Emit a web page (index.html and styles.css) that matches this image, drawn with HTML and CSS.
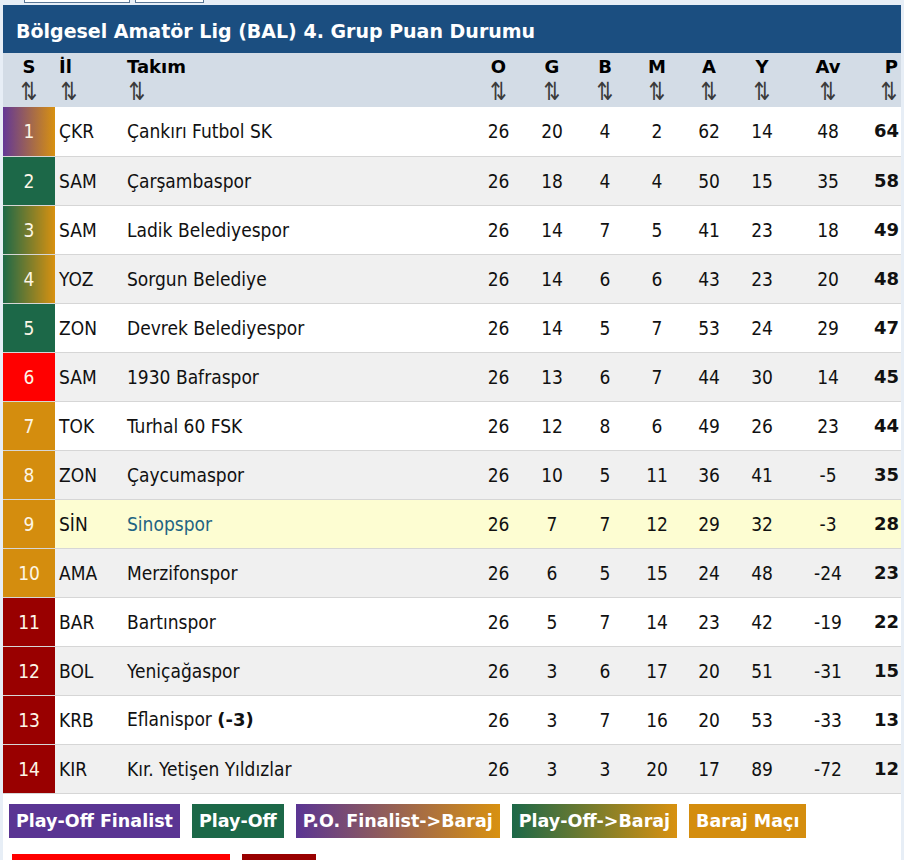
FILE: index.html
```html
<!DOCTYPE html>
<html lang="tr">
<head>
<meta charset="utf-8">
<title>Puan Durumu</title>
<link rel="stylesheet" href="styles.css">
</head>
<body>
<div class="page">
  <div class="tabs"><span class="tab tab-a"></span><span class="tab tab-b"></span></div>
  <div class="box">
    <h1 class="title">Bölgesel Amatör Lig (BAL) 4. Grup Puan Durumu</h1>
    <table class="standings">
      <colgroup>
        <col class="c-s"><col class="c-il"><col class="c-team"><col class="c-n"><col class="c-n2"><col class="c-n3"><col class="c-n3"><col class="c-n3"><col class="c-n2"><col class="c-av"><col class="c-p">
      </colgroup>
      <thead>
        <tr>
          <th class="ctr">S<span class="arr">⇅</span></th>
          <th class="lft il">İl<span class="arr">⇅</span></th>
          <th class="lft team">Takım<span class="arr">⇅</span></th>
          <th class="ctr">O<span class="arr">⇅</span></th>
          <th class="ctr">G<span class="arr">⇅</span></th>
          <th class="ctr">B<span class="arr">⇅</span></th>
          <th class="ctr">M<span class="arr">⇅</span></th>
          <th class="ctr">A<span class="arr">⇅</span></th>
          <th class="ctr">Y<span class="arr">⇅</span></th>
          <th class="ctr">Av<span class="arr">⇅</span></th>
          <th class="rgt">P<span class="arr">⇅</span></th>
        </tr>
      </thead>
      <tbody>
        <tr class="odd"><td class="rank po-final">1</td><td class="il">ÇKR</td><td class="team">Çankırı Futbol SK</td><td>26</td><td>20</td><td>4</td><td>2</td><td>62</td><td>14</td><td>48</td><td class="pts">64</td></tr>
        <tr class="even"><td class="rank po">2</td><td class="il">SAM</td><td class="team">Çarşambaspor</td><td>26</td><td>18</td><td>4</td><td>4</td><td>50</td><td>15</td><td>35</td><td class="pts">58</td></tr>
        <tr class="odd"><td class="rank po-baraj">3</td><td class="il">SAM</td><td class="team">Ladik Belediyespor</td><td>26</td><td>14</td><td>7</td><td>5</td><td>41</td><td>23</td><td>18</td><td class="pts">49</td></tr>
        <tr class="even"><td class="rank po-baraj">4</td><td class="il">YOZ</td><td class="team">Sorgun Belediye</td><td>26</td><td>14</td><td>6</td><td>6</td><td>43</td><td>23</td><td>20</td><td class="pts">48</td></tr>
        <tr class="odd"><td class="rank po">5</td><td class="il">ZON</td><td class="team">Devrek Belediyespor</td><td>26</td><td>14</td><td>5</td><td>7</td><td>53</td><td>24</td><td>29</td><td class="pts">47</td></tr>
        <tr class="even"><td class="rank red">6</td><td class="il">SAM</td><td class="team">1930 Bafraspor</td><td>26</td><td>13</td><td>6</td><td>7</td><td>44</td><td>30</td><td>14</td><td class="pts">45</td></tr>
        <tr class="odd"><td class="rank baraj">7</td><td class="il">TOK</td><td class="team">Turhal 60 FSK</td><td>26</td><td>12</td><td>8</td><td>6</td><td>49</td><td>26</td><td>23</td><td class="pts">44</td></tr>
        <tr class="even"><td class="rank baraj">8</td><td class="il">ZON</td><td class="team">Çaycumaspor</td><td>26</td><td>10</td><td>5</td><td>11</td><td>36</td><td>41</td><td>-5</td><td class="pts">35</td></tr>
        <tr class="mine"><td class="rank baraj">9</td><td class="il">SİN</td><td class="team"><span class="link">Sinopspor</span></td><td>26</td><td>7</td><td>7</td><td>12</td><td>29</td><td>32</td><td>-3</td><td class="pts">28</td></tr>
        <tr class="even"><td class="rank baraj">10</td><td class="il">AMA</td><td class="team">Merzifonspor</td><td>26</td><td>6</td><td>5</td><td>15</td><td>24</td><td>48</td><td>-24</td><td class="pts">23</td></tr>
        <tr class="odd"><td class="rank drop">11</td><td class="il">BAR</td><td class="team">Bartınspor</td><td>26</td><td>5</td><td>7</td><td>14</td><td>23</td><td>42</td><td>-19</td><td class="pts">22</td></tr>
        <tr class="even"><td class="rank drop">12</td><td class="il">BOL</td><td class="team">Yeniçağaspor</td><td>26</td><td>3</td><td>6</td><td>17</td><td>20</td><td>51</td><td>-31</td><td class="pts">15</td></tr>
        <tr class="odd"><td class="rank drop">13</td><td class="il">KRB</td><td class="team">Eflanispor <b>(-3)</b></td><td>26</td><td>3</td><td>7</td><td>16</td><td>20</td><td>53</td><td>-33</td><td class="pts">13</td></tr>
        <tr class="even"><td class="rank drop">14</td><td class="il">KIR</td><td class="team">Kır. Yetişen Yıldızlar</td><td>26</td><td>3</td><td>3</td><td>20</td><td>17</td><td>89</td><td>-72</td><td class="pts">12</td></tr>
      </tbody>
    </table>
    <div class="legend">
      <span class="tag po-final-solid">Play-Off Finalist</span>
      <span class="tag po">Play-Off</span>
      <span class="tag po-final-baraj">P.O. Finalist-&gt;Baraj</span>
      <span class="tag po-baraj">Play-Off-&gt;Baraj</span>
      <span class="tag baraj">Baraj Maçı</span>
    </div>
    <div class="legend legend-2">
      <span class="tag red tag-wide">&nbsp;</span>
      <span class="tag drop tag-short">&nbsp;</span>
    </div>
  </div>
</div>
</body>
</html>
```

FILE: styles.css
```css
html, body {
  margin: 0;
  padding: 0;
  background: #e7eef6;
}
body {
  font-family: "DejaVu Sans Condensed", "DejaVu Sans", Tahoma, sans-serif;
  color: #111;
  overflow: hidden;
}
.page {
  width: 904px;
  height: 860px;
}
.tabs {
  height: 5px;
  display: flex;
  gap: 5px;
  padding-left: 24px;
}
.tab {
  display: block;
  height: 2px;
  background: #fff;
  border: 1px solid #5b7796;
  border-top: none;
}
.tab-a { width: 104px; }
.tab-b { width: 67px; }
.box {
  margin-left: 3px;
  width: 898px;
  background: #fff;
}
.title {
  margin: 0;
  height: 48px;
  background: #1b4e80;
  color: #fff;
  font-family: "DejaVu Sans", Tahoma, sans-serif;
  font-size: 19px;
  font-weight: bold;
  line-height: 52px;
  padding-left: 13px;
  box-sizing: border-box;
}
.standings {
  width: 898px;
  border-collapse: collapse;
  table-layout: fixed;
  font-size: 19px;
}
.c-s { width: 52px; }
.c-il { width: 65px; }
.c-team { width: 352px; }
.c-n { width: 53px; }
.c-n2 { width: 54px; }
.c-n3 { width: 52px; }
.c-av { width: 78px; }
.c-p { width: 34px; }

thead tr {
  background: #d3dce6;
  height: 54px;
}
th {
  font-family: "DejaVu Sans", Tahoma, sans-serif;
  font-weight: bold;
  font-size: 18px;
  line-height: 24px;
  padding: 2px 0 0 0;
  vertical-align: top;
  color: #000;
}
.arr {
  display: block;
  font-family: "DejaVu Sans", sans-serif;
  font-weight: normal;
  font-size: 25px;
  line-height: 26px;
  height: 26px;
  color: #3a3a3a;
  transform: scaleX(0.8);
}
.ctr { text-align: center; }
.lft { text-align: left; }
.rgt { text-align: right; padding-right: 3px; }
th.il { padding-left: 4px; }
th.il .arr { padding-left: 0; transform-origin: 8px 50%; }
th.team { padding-left: 7px; }
th.team .arr { padding-left: 0; transform-origin: 8px 50%; }
th.rgt .arr { transform-origin: 90% 50%; }

tbody tr {
  height: 49px;
  border-bottom: 1px solid #d6d6d6;
}
tbody tr.odd { background: #ffffff; }
tbody tr.even { background: #f0f0f0; }
tbody tr.mine { background: #fdfdd2; }
td {
  padding: 0;
  text-align: center;
  vertical-align: middle;
  line-height: 20px;
}
td.il { text-align: left; padding-left: 4px; }
td.team { text-align: left; padding-left: 7px; }
td.team b {
  font-family: "DejaVu Sans", Tahoma, sans-serif;
  font-weight: bold;
  font-size: 18px;
}
td.pts {
  text-align: right;
  padding-right: 2px;
  font-family: "DejaVu Sans", Tahoma, sans-serif;
  font-weight: bold;
  font-size: 18px;
}
td.rank {
  color: #fdf6e6;
  font-size: 19px;
}
.link { color: #1f6483; }

.po-final { background: linear-gradient(to right, #633796, #d89110); }
.po-final-solid { background: #5a3593; }
.po { background: #1c6848; }
.po-baraj { background: linear-gradient(to right, #1c6848, #d89110); }
.po-final-baraj { background: linear-gradient(to right, #5a3593, #d89110); }
.baraj { background: #d48d0e; }
.red { background: #ff0000; }
.drop { background: #990000; }

.legend {
  display: flex;
  gap: 12px;
  padding: 10px 0 0 6px;
}
.tag {
  display: block;
  color: #fff;
  font-family: "DejaVu Sans", Tahoma, sans-serif;
  font-weight: bold;
  font-size: 17.5px;
  height: 34px;
  line-height: 35px;
  padding: 0 7px;
  white-space: nowrap;
}
.legend-2 {
  padding-top: 16px;
  padding-left: 9px;
}
.tag-wide { width: 204px; }
.tag-short { width: 60px; }
```
